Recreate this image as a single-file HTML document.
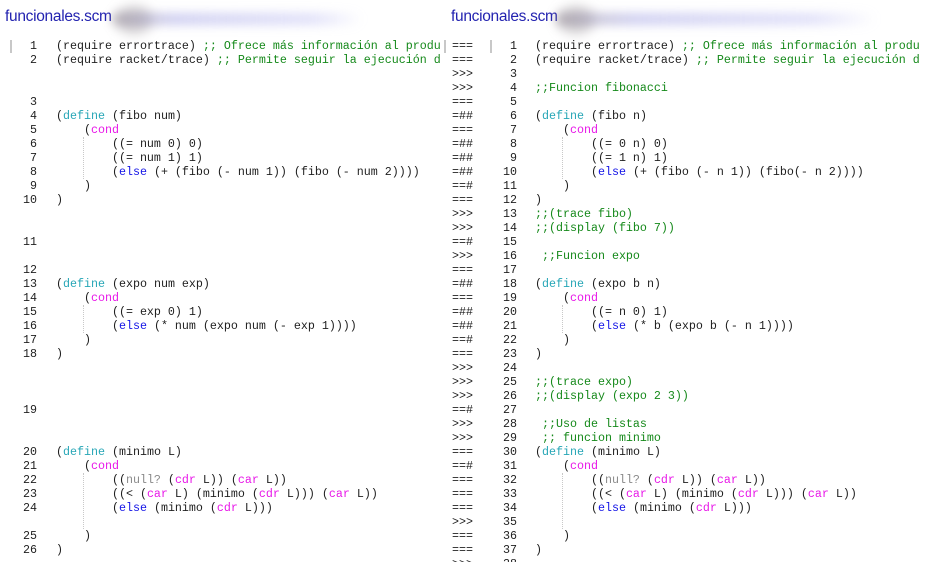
<!DOCTYPE html>
<html><head><meta charset="utf-8"><style>
html,body{margin:0;padding:0;width:946px;height:562px;overflow:hidden;background:#fff}
body{position:relative;font-family:"Liberation Mono",monospace;font-size:11.67px;color:#1e1e1e}
.r{position:absolute;height:14px;line-height:14px;white-space:pre}
.n{position:absolute;width:37px;text-align:right}
.d{color:#26a6b6}.c{color:#e817e8}.e{color:#1414e6}.g{color:#15891a}.x{color:#8a8a8a}
.hd{position:absolute;top:8px;font-family:"Liberation Sans",sans-serif;font-size:15.5px;color:#2323b0;letter-spacing:-0.3px}
.blur{position:absolute;height:12px;border-radius:8px;background:linear-gradient(90deg,rgba(140,130,140,.5),rgba(170,170,230,.55) 25%,rgba(180,180,240,.4) 80%,rgba(200,200,245,0));filter:blur(5px)}
.blob{position:absolute;width:36px;height:28px;border-radius:50%;background:rgba(130,120,125,.35);filter:blur(6px)}
.guide{position:absolute;border-left:1px dotted #c8c8c8;width:0}
.bar{position:absolute;width:2px;background:#c8c8c8}
</style></head><body>
<div class="hd" style="left:5px">funcionales.scm</div>
<div class="blob" style="left:116px;top:6px"></div>
<div class="blur" style="left:112px;top:13px;width:250px"></div>
<div class="hd" style="left:451px">funcionales.scm</div>
<div class="blob" style="left:558px;top:6px"></div>
<div class="blur" style="left:556px;top:13px;width:320px"></div>
<div class="bar" style="left:10px;top:40px;height:13px"></div>
<div class="bar" style="left:444px;top:40px;height:13px"></div>
<div class="bar" style="left:490px;top:40px;height:13px"></div>

<!-- LEFT PANE -->
<div class="r" style="top:39px;left:0"><span class="n">1</span></div><div class="r" style="top:39px;left:56px">(require errortrace) <span class="g">;; Ofrece más información al produ</span></div>
<div class="r" style="top:53px;left:0"><span class="n">2</span></div><div class="r" style="top:53px;left:56px">(require racket/trace) <span class="g">;; Permite seguir la ejecución d</span></div>
<div class="r" style="top:95px;left:0"><span class="n">3</span></div>
<div class="r" style="top:109px;left:0"><span class="n">4</span></div><div class="r" style="top:109px;left:56px">(<span class="d">define</span> (fibo num)</div>
<div class="r" style="top:123px;left:0"><span class="n">5</span></div><div class="r" style="top:123px;left:56px">    (<span class="c">cond</span></div>
<div class="r" style="top:137px;left:0"><span class="n">6</span></div><div class="r" style="top:137px;left:56px">        ((= num 0) 0)</div>
<div class="r" style="top:151px;left:0"><span class="n">7</span></div><div class="r" style="top:151px;left:56px">        ((= num 1) 1)</div>
<div class="r" style="top:165px;left:0"><span class="n">8</span></div><div class="r" style="top:165px;left:56px">        (<span class="e">else</span> (+ (fibo (- num 1)) (fibo (- num 2))))</div>
<div class="r" style="top:179px;left:0"><span class="n">9</span></div><div class="r" style="top:179px;left:56px">    )</div>
<div class="r" style="top:193px;left:0"><span class="n">10</span></div><div class="r" style="top:193px;left:56px">)</div>
<div class="r" style="top:235px;left:0"><span class="n">11</span></div>
<div class="r" style="top:263px;left:0"><span class="n">12</span></div>
<div class="r" style="top:277px;left:0"><span class="n">13</span></div><div class="r" style="top:277px;left:56px">(<span class="d">define</span> (expo num exp)</div>
<div class="r" style="top:291px;left:0"><span class="n">14</span></div><div class="r" style="top:291px;left:56px">    (<span class="c">cond</span></div>
<div class="r" style="top:305px;left:0"><span class="n">15</span></div><div class="r" style="top:305px;left:56px">        ((= exp 0) 1)</div>
<div class="r" style="top:319px;left:0"><span class="n">16</span></div><div class="r" style="top:319px;left:56px">        (<span class="e">else</span> (* num (expo num (- exp 1))))</div>
<div class="r" style="top:333px;left:0"><span class="n">17</span></div><div class="r" style="top:333px;left:56px">    )</div>
<div class="r" style="top:347px;left:0"><span class="n">18</span></div><div class="r" style="top:347px;left:56px">)</div>
<div class="r" style="top:403px;left:0"><span class="n">19</span></div>
<div class="r" style="top:445px;left:0"><span class="n">20</span></div><div class="r" style="top:445px;left:56px">(<span class="d">define</span> (minimo L)</div>
<div class="r" style="top:459px;left:0"><span class="n">21</span></div><div class="r" style="top:459px;left:56px">    (<span class="c">cond</span></div>
<div class="r" style="top:473px;left:0"><span class="n">22</span></div><div class="r" style="top:473px;left:56px">        ((<span class="x">null?</span> (<span class="c">cdr</span> L)) (<span class="c">car</span> L))</div>
<div class="r" style="top:487px;left:0"><span class="n">23</span></div><div class="r" style="top:487px;left:56px">        ((&lt; (<span class="c">car</span> L) (minimo (<span class="c">cdr</span> L))) (<span class="c">car</span> L))</div>
<div class="r" style="top:501px;left:0"><span class="n">24</span></div><div class="r" style="top:501px;left:56px">        (<span class="e">else</span> (minimo (<span class="c">cdr</span> L)))</div>
<div class="r" style="top:529px;left:0"><span class="n">25</span></div><div class="r" style="top:529px;left:56px">    )</div>
<div class="r" style="top:543px;left:0"><span class="n">26</span></div><div class="r" style="top:543px;left:56px">)</div>
<div class="guide" style="left:83px;top:137px;height:42px"></div>
<div class="guide" style="left:83px;top:305px;height:28px"></div>
<div class="guide" style="left:83px;top:473px;height:56px"></div>

<!-- RIGHT PANE -->
<div class="r" style="top:39px;left:452px">===
===
&gt;&gt;&gt;
&gt;&gt;&gt;
===
=##
===
=##
=##
=##
==#
===
&gt;&gt;&gt;
&gt;&gt;&gt;
==#
&gt;&gt;&gt;
===
=##
===
=##
=##
==#
===
&gt;&gt;&gt;
&gt;&gt;&gt;
&gt;&gt;&gt;
==#
&gt;&gt;&gt;
&gt;&gt;&gt;
===
==#
===
===
===
&gt;&gt;&gt;
===
===
&gt;&gt;&gt;</div>
<div class="r" style="top:39px;left:480px;width:37px;text-align:right">1
2
3
4
5
6
7
8
9
10
11
12
13
14
15
16
17
18
19
20
21
22
23
24
25
26
27
28
29
30
31
32
33
34
35
36
37
38</div>
<div class="r" style="top:39px;left:535px">(require errortrace) <span class="g">;; Ofrece más información al produ</span>
(require racket/trace) <span class="g">;; Permite seguir la ejecución d</span>

<span class="g">;;Funcion fibonacci</span>

(<span class="d">define</span> (fibo n)
    (<span class="c">cond</span>
        ((= 0 n) 0)
        ((= 1 n) 1)
        (<span class="e">else</span> (+ (fibo (- n 1)) (fibo(- n 2))))
    )
)
<span class="g">;;(trace fibo)</span>
<span class="g">;;(display (fibo 7))</span>

<span class="g"> ;;Funcion expo</span>

(<span class="d">define</span> (expo b n)
    (<span class="c">cond</span>
        ((= n 0) 1)
        (<span class="e">else</span> (* b (expo b (- n 1))))
    )
)

<span class="g">;;(trace expo)</span>
<span class="g">;;(display (expo 2 3))</span>

<span class="g"> ;;Uso de listas</span>
<span class="g"> ;; funcion minimo</span>
(<span class="d">define</span> (minimo L)
    (<span class="c">cond</span>
        ((<span class="x">null?</span> (<span class="c">cdr</span> L)) (<span class="c">car</span> L))
        ((&lt; (<span class="c">car</span> L) (minimo (<span class="c">cdr</span> L))) (<span class="c">car</span> L))
        (<span class="e">else</span> (minimo (<span class="c">cdr</span> L)))

    )
)</div>
<div class="guide" style="left:562px;top:137px;height:42px"></div>
<div class="guide" style="left:562px;top:305px;height:28px"></div>
<div class="guide" style="left:562px;top:473px;height:56px"></div>
</body></html>
